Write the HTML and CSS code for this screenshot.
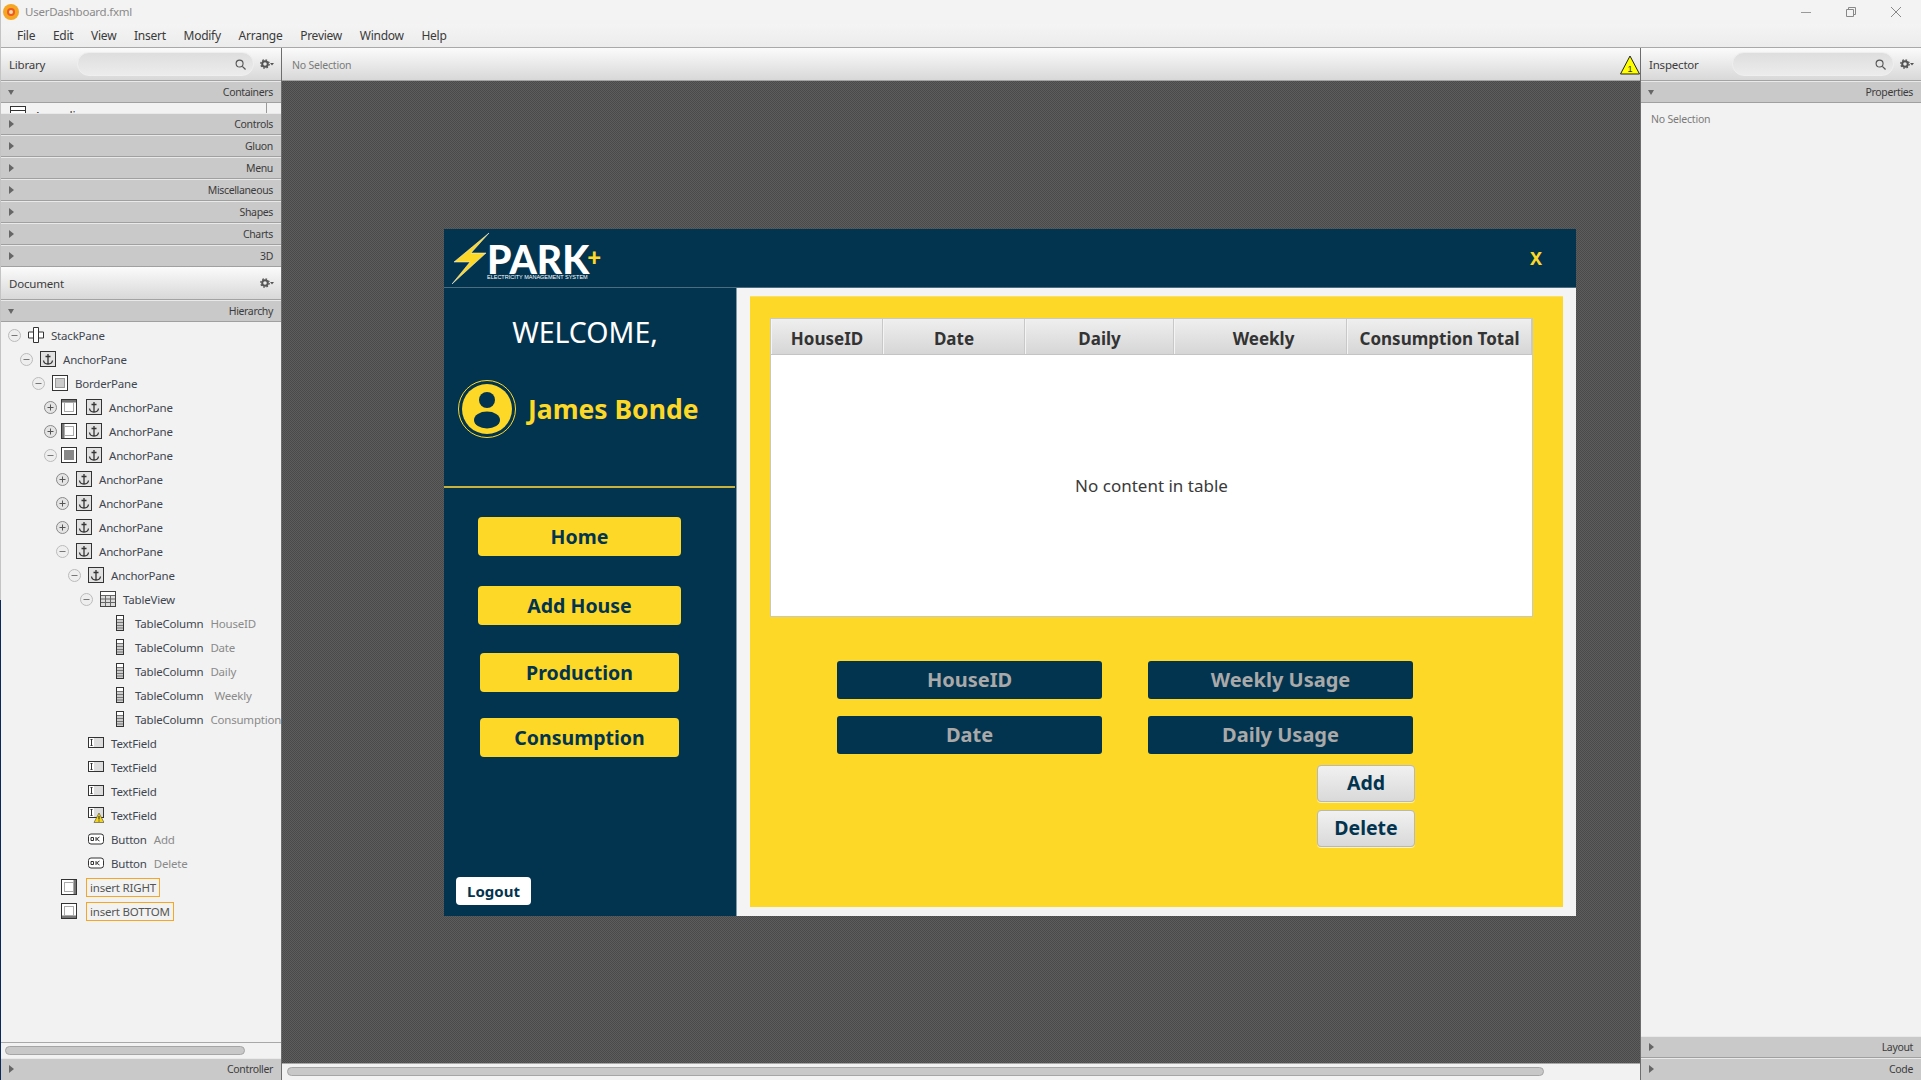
FILE: index.html
```html
<!DOCTYPE html>
<html lang="en">
<head>
  <meta charset="UTF-8" />
  <title>UserDashboard.fxml</title>
  <link rel="stylesheet" href="styles.css">
</head>
<body>
  <svg class="icon-defs" aria-hidden="true">
    <symbol id="i-anchor" viewBox="0 0 16 16">
      <rect x=".5" y=".5" width="15" height="15" fill="#e2e2e2" stroke="#333"/>
      <path d="M8 3v10M5.500 5.500h5M3.500 9.500c.3 2.500 2 3.500 4.500 3.500s4.200-1 4.500-3.500" fill="none" stroke="#333" stroke-width="1.300"/>
    </symbol>
    <symbol id="i-stack" viewBox="0 0 16 16">
      <path d="M5.500.5h5v15h-5zM5.500 5H.5v6h5M10.500 5h5v6h-5" fill="#fff" stroke="#333"/>
    </symbol>
    <symbol id="i-border" viewBox="0 0 16 16">
      <rect x=".5" y=".5" width="15" height="15" fill="#fff" stroke="#333"/>
      <rect x="3.500" y="3.500" width="9" height="9" fill="#ccc" stroke="#999"/>
    </symbol>
    <symbol id="i-top" viewBox="0 0 16 16">
      <rect x=".5" y=".5" width="15" height="15" fill="#fff" stroke="#333"/>
      <rect x="1" y="1" width="14" height="2.500" fill="#777"/>
      <rect x="3.500" y="3.500" width="9" height="9" fill="#fff" stroke="#aaa"/>
    </symbol>
    <symbol id="i-left" viewBox="0 0 16 16">
      <rect x=".5" y=".5" width="15" height="15" fill="#fff" stroke="#333"/>
      <rect x="1" y="1" width="2.500" height="14" fill="#777"/>
      <rect x="3.500" y="3.500" width="9" height="9" fill="#fff" stroke="#aaa"/>
    </symbol>
    <symbol id="i-center" viewBox="0 0 16 16">
      <rect x=".5" y=".5" width="15" height="15" fill="#fff" stroke="#333"/>
      <rect x="3" y="3" width="10" height="10" fill="#888"/>
    </symbol>
    <symbol id="i-right" viewBox="0 0 16 16">
      <rect x=".5" y=".5" width="15" height="15" fill="#fff" stroke="#333"/>
      <rect x="12.500" y="1" width="2.500" height="14" fill="#777"/>
      <rect x="3.500" y="3.500" width="9" height="9" fill="#fff" stroke="#aaa"/>
    </symbol>
    <symbol id="i-bottom" viewBox="0 0 16 16">
      <rect x=".5" y=".5" width="15" height="15" fill="#fff" stroke="#333"/>
      <rect x="1" y="12.500" width="14" height="2.500" fill="#777"/>
      <rect x="3.500" y="3.500" width="9" height="9" fill="#fff" stroke="#aaa"/>
    </symbol>
    <symbol id="i-table" viewBox="0 0 16 16">
      <rect x=".5" y=".5" width="15" height="15" fill="#ddd" stroke="#444"/>
      <rect x="1" y="1" width="14" height="3" fill="#fff"/>
      <path d="M1 4.500h14M1 8h14M1 11.500h14M5.500 4v11M10.500 4v11" stroke="#666"/>
    </symbol>
    <symbol id="i-column" viewBox="0 0 16 16">
      <rect x="4.500" y=".5" width="7" height="15" fill="#ccc" stroke="#333"/>
      <rect x="5" y="1" width="6" height="3" fill="#fff"/>
      <path d="M5 4.500h6M5 7.500h6M5 10.500h6M5 13h6" stroke="#777"/>
    </symbol>
    <symbol id="i-peek" viewBox="0 0 16 16">
      <rect x=".5" y=".5" width="15" height="15" fill="#fff" stroke="#333"/>
      <path d="M1 4.500h14" stroke="#333"/>
    </symbol>
    <symbol id="i-field" viewBox="0 0 16 16">
      <rect x=".5" y="2.500" width="15" height="10" fill="#ddd" stroke="#333"/>
      <rect x="1" y="3" width="5" height="9" fill="#fff"/>
      <path d="M3.500 5v5M2.500 4.500h2M2.500 10.500h2" stroke="#333"/>
    </symbol>
    <symbol id="i-field-warn" viewBox="0 0 16 16">
      <rect x=".5" y=".5" width="15" height="10" fill="#ddd" stroke="#333"/>
      <rect x="1" y="1" width="5" height="9" fill="#fff"/>
      <path d="M3.500 3v5M2.500 2.500h2M2.500 8.500h2" stroke="#333"/>
      <path d="M11 6l5 9.500H6z" fill="#f4d51c" stroke="#444" stroke-width=".6"/>
      <path d="M11 9v3.500M11 13.500v1" stroke="#222"/>
    </symbol>
    <symbol id="i-button" viewBox="0 0 16 16">
      <rect x=".5" y="3" width="15" height="10" rx="2.500" fill="#fff" stroke="#333"/>
      <path d="M3 6.500h2.500v3H3zM8 6v4M11.500 6L8.500 8l3 2" fill="none" stroke="#333"/>
    </symbol>
    <symbol id="i-minus" viewBox="0 0 13 13">
      <circle cx="6.500" cy="6.500" r="6" fill="#eee" stroke="#bbb"/>
      <path d="M3.500 6.500h6" stroke="#777"/>
    </symbol>
    <symbol id="i-plus" viewBox="0 0 13 13">
      <circle cx="6.500" cy="6.500" r="6" fill="#e4e4e4" stroke="#888"/>
      <path d="M3.500 6.500h6M6.500 3.500v6" stroke="#555"/>
    </symbol>
    <symbol id="i-gear" viewBox="0 0 14 10">
      <circle cx="5" cy="5" r="2.800" fill="none" stroke="#555" stroke-width="2"/>
      <circle cx="5" cy="5" r="4.200" fill="none" stroke="#555" stroke-width="1.300" stroke-dasharray="1.600 1.700"/>
      <path d="M10 4h4l-2 2.500z" fill="#555"/>
    </symbol>
    <symbol id="i-search" viewBox="0 0 12 12">
      <circle cx="5" cy="5" r="3.800" fill="none" stroke="#555" stroke-width="1.200"/>
      <path d="M8 8l3.500 3.500" stroke="#555" stroke-width="1.400"/>
    </symbol>
  </svg>

  <div class="title-bar">
    <svg class="app-icon" viewBox="0 0 16 16">
      <circle cx="8" cy="8" r="8" fill="#f5a623"/>
      <circle cx="8" cy="8" r="4" fill="#ec5a20"/>
      <circle cx="8" cy="8" r="2" fill="#fbd9b0"/>
    </svg>
    <span class="doc-name">UserDashboard.fxml</span>
    <div class="win-controls">
      <svg viewBox="0 0 12 12"><path d="M1 6.500h10" stroke="#999"/></svg>
      <svg viewBox="0 0 12 12"><path d="M1.500 3.500h7v7h-7zM3.500 3.500v-2h7v7h-2" fill="none" stroke="#888"/></svg>
      <svg viewBox="0 0 12 12"><path d="M1 1l10 10M11 1L1 11" stroke="#888"/></svg>
    </div>
  </div>

  <nav class="menu-bar">
    <a>File</a><a>Edit</a><a>View</a><a>Insert</a><a>Modify</a><a>Arrange</a><a>Preview</a><a>Window</a><a>Help</a>
  </nav>

  <div class="workspace">
    <aside class="left-panel">
      <div class="panel-head">
        <span class="panel-title">Library</span>
        <div class="search-box"><svg class="search-icon"><use href="#i-search"/></svg></div>
        <svg class="gear"><use href="#i-gear"/></svg>
      </div>
      <div class="section open">Containers</div>
      <div class="lib-peek">
        <svg class="peek-icon"><use href="#i-peek"/></svg>
        <span>Accordion</span>
      </div>
      <div class="section">Controls</div>
      <div class="section">Gluon</div>
      <div class="section">Menu</div>
      <div class="section">Miscellaneous</div>
      <div class="section">Shapes</div>
      <div class="section">Charts</div>
      <div class="section">3D</div>

      <div class="panel-head doc-head">
        <span class="panel-title">Document</span>
        <svg class="gear"><use href="#i-gear"/></svg>
      </div>
      <div class="section open">Hierarchy</div>

      <ul class="tree">
        <li class="row d0"><svg class="tog"><use href="#i-minus"/></svg><svg class="ico"><use href="#i-stack"/></svg>StackPane</li>
        <li class="row d1"><svg class="tog"><use href="#i-minus"/></svg><svg class="ico"><use href="#i-anchor"/></svg>AnchorPane</li>
        <li class="row d2"><svg class="tog"><use href="#i-minus"/></svg><svg class="ico"><use href="#i-border"/></svg>BorderPane</li>
        <li class="row d3"><svg class="tog"><use href="#i-plus"/></svg><svg class="slot"><use href="#i-top"/></svg><svg class="ico"><use href="#i-anchor"/></svg>AnchorPane</li>
        <li class="row d3"><svg class="tog"><use href="#i-plus"/></svg><svg class="slot"><use href="#i-left"/></svg><svg class="ico"><use href="#i-anchor"/></svg>AnchorPane</li>
        <li class="row d3"><svg class="tog"><use href="#i-minus"/></svg><svg class="slot"><use href="#i-center"/></svg><svg class="ico"><use href="#i-anchor"/></svg>AnchorPane</li>
        <li class="row d4"><svg class="tog"><use href="#i-plus"/></svg><svg class="ico"><use href="#i-anchor"/></svg>AnchorPane</li>
        <li class="row d4"><svg class="tog"><use href="#i-plus"/></svg><svg class="ico"><use href="#i-anchor"/></svg>AnchorPane</li>
        <li class="row d4"><svg class="tog"><use href="#i-plus"/></svg><svg class="ico"><use href="#i-anchor"/></svg>AnchorPane</li>
        <li class="row d4"><svg class="tog"><use href="#i-minus"/></svg><svg class="ico"><use href="#i-anchor"/></svg>AnchorPane</li>
        <li class="row d5"><svg class="tog"><use href="#i-minus"/></svg><svg class="ico"><use href="#i-anchor"/></svg>AnchorPane</li>
        <li class="row d6"><svg class="tog"><use href="#i-minus"/></svg><svg class="ico"><use href="#i-table"/></svg>TableView</li>
        <li class="row d7"><span class="tog"></span><svg class="ico"><use href="#i-column"/></svg>TableColumn<em>HouseID</em></li>
        <li class="row d7"><span class="tog"></span><svg class="ico"><use href="#i-column"/></svg>TableColumn<em>Date</em></li>
        <li class="row d7"><span class="tog"></span><svg class="ico"><use href="#i-column"/></svg>TableColumn<em>Daily</em></li>
        <li class="row d7"><span class="tog"></span><svg class="ico"><use href="#i-column"/></svg>TableColumn<em class="pad">Weekly</em></li>
        <li class="row d7"><span class="tog"></span><svg class="ico"><use href="#i-column"/></svg>TableColumn<em>Consumption Total</em></li>
        <li class="row d5"><span class="tog"></span><svg class="ico"><use href="#i-field"/></svg>TextField</li>
        <li class="row d5"><span class="tog"></span><svg class="ico"><use href="#i-field"/></svg>TextField</li>
        <li class="row d5"><span class="tog"></span><svg class="ico"><use href="#i-field"/></svg>TextField</li>
        <li class="row d5"><span class="tog"></span><svg class="ico"><use href="#i-field-warn"/></svg>TextField</li>
        <li class="row d5"><span class="tog"></span><svg class="ico"><use href="#i-button"/></svg>Button<em>Add</em></li>
        <li class="row d5"><span class="tog"></span><svg class="ico"><use href="#i-button"/></svg>Button<em>Delete</em></li>
        <li class="row d3"><span class="tog"></span><svg class="slot"><use href="#i-right"/></svg><span class="insert">insert RIGHT</span></li>
        <li class="row d3"><span class="tog"></span><svg class="slot"><use href="#i-bottom"/></svg><span class="insert">insert BOTTOM</span></li>
      </ul>

      <div class="hscroll left-scroll"><div class="thumb"></div></div>
      <div class="section closed-last">Controller</div>
    </aside>

    <main class="center">
      <div class="status-bar">
        <span class="status-text">No Selection</span>
        <svg class="warn" viewBox="0 0 20 20">
          <path d="M10 1l9.500 18H.5z" fill="#ffff00" stroke="#222"/>
          <text x="10" y="16.500" text-anchor="middle" font-size="9" font-family="Liberation Sans" fill="#333">1</text>
        </svg>
      </div>

      <div class="canvas">
        <section class="app">
          <header class="app-head">
            <div class="logo">
              <svg class="bolt" viewBox="0 0 38 52">
                <path d="M37 1L2 30h16L0 52l34-31H19z" fill="#fdd827" stroke="#fff" stroke-width=".5"/>
              </svg>
              <div class="brand">
                <div class="brand-name">PARK<span>+</span></div>
                <div class="brand-sub">ELECTRICITY MANAGEMENT SYSTEM</div>
              </div>
            </div>
            <span class="app-close">X</span>
          </header>

          <div class="app-body">
            <div class="sidebar">
              <h1 class="welcome">WELCOME,</h1>
              <div class="user">
                <svg class="avatar" viewBox="0 0 58 58">
                  <circle cx="29" cy="29" r="28.500" fill="none" stroke="#fdd827" stroke-width="1"/>
                  <circle cx="29" cy="29" r="25" fill="#fdd827"/>
                  <circle cx="29" cy="20" r="8" fill="#03344f"/>
                  <ellipse cx="29" cy="40" rx="13" ry="8.500" fill="#03344f"/>
                </svg>
                <span class="user-name">James Bonde</span>
              </div>
              <div class="divider"></div>
              <button class="nav-btn btn-home">Home</button>
              <button class="nav-btn btn-add">Add House</button>
              <button class="nav-btn narrow btn-prod">Production</button>
              <button class="nav-btn narrow btn-cons">Consumption</button>
              <button class="logout">Logout</button>
            </div>

            <div class="content">
              <div class="yellow-pane">
                <div class="table">
                  <div class="table-head">
                    <div>HouseID</div><div>Date</div><div>Daily</div><div>Weekly</div><div>Consumption Total</div>
                  </div>
                  <div class="table-empty">No content in table</div>
                </div>

                <div class="form">
                  <div class="fields">
                    <div class="field">HouseID</div>
                    <div class="field">Weekly Usage</div>
                    <div class="field">Date</div>
                    <div class="field">Daily Usage</div>
                  </div>
                  <button class="act-btn btn-first">Add</button>
                  <button class="act-btn">Delete</button>
                </div>
              </div>
            </div>
          </div>
        </section>
      </div>

      <div class="hscroll main-scroll"><div class="thumb"></div></div>
    </main>

    <aside class="right-panel">
      <div class="panel-head">
        <span class="panel-title">Inspector</span>
        <div class="search-box insp"><svg class="search-icon"><use href="#i-search"/></svg></div>
        <svg class="gear"><use href="#i-gear"/></svg>
      </div>
      <div class="section open">Properties</div>
      <div class="insp-body">No Selection</div>
      <div class="section">Layout</div>
      <div class="section closed-last">Code</div>
    </aside>
  </div>
</body>
</html>
```

FILE: styles.css
```css
* {
  margin: 0;
  padding: 0;
  box-sizing: border-box;
}

html, body {
  height: 100%;
  overflow: hidden;
}

body {
  width: 1921px;
  height: 1080px;
  display: flex;
  flex-direction: column;
  padding-left: 1px;
  font-family: "Noto Sans", "Open Sans", sans-serif;
  font-size: 12px;
  color: #333;
  background: linear-gradient(to bottom, #c4c4c4 0, #c4c4c4 600px, #0b2a5c 600px);
}

.icon-defs {
  display: none;
}

/* window chrome */
.title-bar {
  height: 24px;
  flex: none;
  display: flex;
  align-items: center;
  padding-left: 2px;
  background: #f3f3f3;
}

.app-icon {
  width: 16px;
  height: 16px;
}

.doc-name {
  margin: -2px 0 0 6px;
  font-size: 11.500px;
  letter-spacing: -0.25px;
  color: #8a8a8a;
}

.win-controls {
  margin-left: auto;
  display: flex;
  gap: 33px;
  padding-right: 19px;
}

.win-controls svg {
  width: 12px;
  height: 12px;
}

.menu-bar {
  height: 24px;
  flex: none;
  display: flex;
  align-items: center;
  gap: 17.700px;
  padding-left: 16px;
  background: linear-gradient(#f4f4f4, #ececec);
  border-bottom: 1px solid #a9a9a9;
  font-size: 12px;
  letter-spacing: -0.25px;
  color: #3a3a3a;
}

.workspace {
  flex: 1;
  min-height: 0;
  display: flex;
}

.left-panel, .right-panel {
  width: 281px;
  flex: none;
  display: flex;
  flex-direction: column;
  background: #f2f2f2;
}

.left-panel {
  border-right: 1px solid #6d6d6d;
}

.right-panel {
  width: 280px;
}

.panel-head {
  height: 33px;
  flex: none;
  display: flex;
  align-items: center;
  padding: 0 7px 0 8px;
  background: linear-gradient(#fbfbfb, #d8d8d8);
  border-bottom: 1px solid #a3a3a3;
}

.panel-title {
  font-size: 11.500px;
  letter-spacing: -0.2px;
  color: #3c3c3c;
}

.doc-head {
  justify-content: space-between;
}

.search-box {
  width: 177px;
  height: 24px;
  margin-left: auto;
  margin-right: 6px;
  display: flex;
  align-items: center;
  justify-content: flex-end;
  padding-right: 7px;
  border: 1px solid #efefef;
  border-radius: 12px;
  background: linear-gradient(#dedede, #ececec);
}

.search-box.insp {
  width: 162px;
}

.search-icon {
  width: 11px;
  height: 11px;
}

.gear {
  width: 14px;
  height: 10px;
}

.section {
  height: 22px;
  flex: none;
  display: flex;
  align-items: center;
  justify-content: flex-end;
  position: relative;
  padding: 0 8px 1px 0;
  background: #c9c9c9;
  border-top: 1px solid #e9e9e9;
  border-bottom: 1px solid #a0a0a0;
  font-size: 10.500px;
  letter-spacing: -0.35px;
  color: #3c3c3c;
}

.section::before {
  content: "";
  position: absolute;
  left: 8px;
  top: 6px;
  border-left: 5px solid #666;
  border-top: 4px solid transparent;
  border-bottom: 4px solid transparent;
}

.section.open::before {
  left: 7px;
  top: 8px;
  border-top: 5px solid #666;
  border-bottom: 0;
  border-left: 3.500px solid transparent;
  border-right: 3.500px solid transparent;
}

.closed-last {
  border-bottom: 0;
}

.lib-peek {
  height: 10px;
  flex: none;
  display: flex;
  gap: 8px;
  overflow: hidden;
  padding: 3px 0 0 9px;
  background: #f2f2f2;
  border-right: 1px solid #999;
  width: 266px;
  font-size: 12px;
  line-height: 16px;
}

.lib-peek span {
  margin-top: 3px;
}

.peek-icon {
  width: 16px;
  height: 16px;
  flex: none;
}

/* hierarchy tree */
.tree {
  flex: 1;
  min-height: 0;
  list-style: none;
  overflow: hidden;
  padding-top: 1px;
}

.row {
  height: 24px;
  display: flex;
  align-items: center;
  white-space: nowrap;
  font-size: 11.500px;
  letter-spacing: -0.2px;
  color: #3f4750;
}

.d0 { padding-left: 7px; }
.d1 { padding-left: 19px; }
.d2 { padding-left: 31px; }
.d3 { padding-left: 43px; }
.d4 { padding-left: 55px; }
.d5 { padding-left: 67px; }
.d6 { padding-left: 79px; }
.d7 { padding-left: 91px; }

.tog {
  width: 13px;
  height: 13px;
  flex: none;
  margin-right: 7px;
}

.ico {
  width: 16px;
  height: 16px;
  flex: none;
  margin-right: 7px;
}

.slot {
  width: 16px;
  height: 16px;
  flex: none;
  margin-left: -3px;
  margin-right: 9px;
}

.row em {
  font-style: normal;
  margin-left: 7px;
  color: #8a8a8a;
}

.row em.pad {
  margin-left: 11px;
}

.insert {
  padding: 0 3px;
  height: 19px;
  line-height: 17px;
  border: 1px solid #f5a623;
  color: #555;
}

.hscroll {
  flex: none;
  padding: 3px 4px;
  background: #f2f2f2;
  border-top: 1px solid #a8a8a8;
}

.thumb {
  height: 9px;
  border: 1px solid #a5a5a5;
  border-radius: 5px;
  background: #c8c8c8;
}

.left-scroll {
  height: 16px;
}

.left-scroll .thumb {
  width: 240px;
}

.main-scroll {
  height: 17px;
  padding: 3px 5px;
}

.main-scroll .thumb {
  width: 1257px;
}

/* center */
.center {
  flex: 1;
  min-width: 0;
  display: flex;
  flex-direction: column;
  border-right: 1px solid #6d6d6d;
}

.status-bar {
  height: 33px;
  flex: none;
  display: flex;
  align-items: center;
  justify-content: space-between;
  padding-left: 10px;
  background: linear-gradient(#fbfbfb, #d8d8d8);
  border-bottom: 1px solid #a3a3a3;
}

.status-text {
  margin-top: 1px;
  font-size: 10.500px;
  letter-spacing: -0.2px;
  color: #7a7a7a;
}

.warn {
  width: 20px;
  height: 20px;
  margin-top: 2px;
}

.canvas {
  flex: 1;
  min-height: 0;
  padding: 148px 0 0 162px;
  overflow: hidden;
  background-color: #555;
  background-image: repeating-conic-gradient(#4a4a4a 0 25%, #5d5d5d 0 50%);
  background-size: 2px 2px;
}

/* the app being edited */
.app {
  width: 1132px;
  height: 687px;
  display: flex;
  flex-direction: column;
  background: #03344f;
  font-family: "Noto Sans", "DejaVu Sans", sans-serif;
}

.app-head {
  height: 59px;
  flex: none;
  display: flex;
  align-items: center;
  justify-content: space-between;
  padding: 0 34px 0 8px;
  border-bottom: 1px solid #4c6d80;
}

.logo {
  display: flex;
  align-items: flex-end;
}

.bolt {
  width: 38px;
  height: 52px;
}

.brand {
  margin-left: -3px;
  margin-bottom: 4px;
  color: #fff;
}

.brand-name {
  font-family: "Lato", sans-serif;
  font-weight: 900;
  font-size: 39px;
  line-height: 29px;
  white-space: nowrap;
}

.brand-name span {
  color: #fdd827;
  font-size: 24px;
  vertical-align: 8px;
  margin-left: -2px;
}

.brand-sub {
  font-family: "Liberation Sans", sans-serif;
  font-size: 5.500px;
  line-height: 6px;
  white-space: nowrap;
}

.app-close {
  font-size: 18px;
  font-weight: 700;
  color: #fdd827;
}

.app-body {
  flex: 1;
  min-height: 0;
  display: flex;
}

.sidebar {
  width: 293px;
  flex: none;
  display: flex;
  flex-direction: column;
  align-items: flex-start;
  border-right: 1px solid #7f9bab;
}

.welcome {
  align-self: stretch;
  margin-top: 26px;
  padding-right: 10px;
  text-align: center;
  font-size: 28.500px;
  font-weight: 400;
  line-height: 36px;
  color: #fff;
}

.user {
  display: flex;
  align-items: center;
  gap: 12px;
  margin: 30px 0 0 14px;
}

.avatar {
  width: 58px;
  height: 58px;
}

.user-name {
  font-size: 26.500px;
  font-weight: 700;
  color: #fdd827;
}

.divider {
  width: 291px;
  height: 2px;
  margin-top: 48px;
  background: #c8b13c;
}

.nav-btn {
  width: 203px;
  height: 39px;
  margin-left: 34px;
  border: 0;
  border-radius: 4px;
  background: #fdd827;
  font-family: inherit;
  font-size: 19.500px;
  font-weight: 700;
  color: #03344f;
}

.nav-btn.narrow {
  width: 199px;
  margin-left: 36px;
}

.btn-home { margin-top: 29px; }
.btn-add { margin-top: 30px; }
.btn-prod { margin-top: 28px; }
.btn-cons { margin-top: 26px; }

.logout {
  width: 75px;
  height: 28px;
  margin: auto 0 11px 12px;
  border: 0;
  border-radius: 4px;
  background: #fff;
  font-family: inherit;
  font-size: 15px;
  font-weight: 700;
  color: #03344f;
}

.content {
  flex: 1;
  min-width: 0;
  padding: 8px 13px 9px;
  background: #f4f4f4;
}

.yellow-pane {
  height: 100%;
  padding: 21px 30px 0 20px;
  background: #fdd827;
  border-top: 1px solid #fae06a;
}

.table {
  height: 299px;
  display: flex;
  flex-direction: column;
  background: #fff;
  border: 1px solid #c8c8c8;
}

.table-head {
  height: 36px;
  flex: none;
  display: grid;
  grid-template-columns: 112px 142px 149px 173px 1fr;
  border-bottom: 1px solid #c4c4c4;
}

.table-head div {
  display: flex;
  align-items: center;
  justify-content: center;
  padding-top: 3px;
  background: linear-gradient(#efefef, #d6d6d6);
  border-right: 1px solid #c8c8c8;
  border-left: 1px solid #f4f4f4;
  font-size: 17px;
  font-weight: 700;
  color: #333;
}

.table-head div:nth-child(4) {
  padding-left: 6px;
}

.table-empty {
  flex: 1;
  display: flex;
  align-items: center;
  justify-content: center;
  font-size: 17px;
  color: #3a3a3a;
}

.form {
  width: 578px;
  margin: 44px 0 0 67px;
  display: flex;
  flex-direction: column;
  align-items: flex-end;
}

.fields {
  width: 100%;
  display: grid;
  grid-template-columns: 265px 265px;
  column-gap: 46px;
  row-gap: 17px;
}

.field {
  height: 38px;
  display: flex;
  align-items: center;
  justify-content: center;
  padding-bottom: 1px;
  border-radius: 3px;
  background: #03344f;
  font-size: 20px;
  font-weight: 700;
  color: #a9a9a9;
}

.act-btn {
  width: 98px;
  height: 37px;
  margin-top: 8px;
  padding-bottom: 3px;
  border: 1px solid #b8b8b8;
  border-radius: 4px;
  background: linear-gradient(#f1f1f1, #d9d9d9);
  box-shadow: 0 1px 0 #fff3b0;
  font-family: inherit;
  font-size: 19.500px;
  font-weight: 700;
  color: #03344f;
}

.btn-first {
  margin-top: 11px;
}

/* inspector */
.insp-body {
  flex: 1;
  min-height: 0;
  padding: 9px 0 0 10px;
  font-size: 10.500px;
  letter-spacing: -0.2px;
  color: #7a7a7a;
}
```
